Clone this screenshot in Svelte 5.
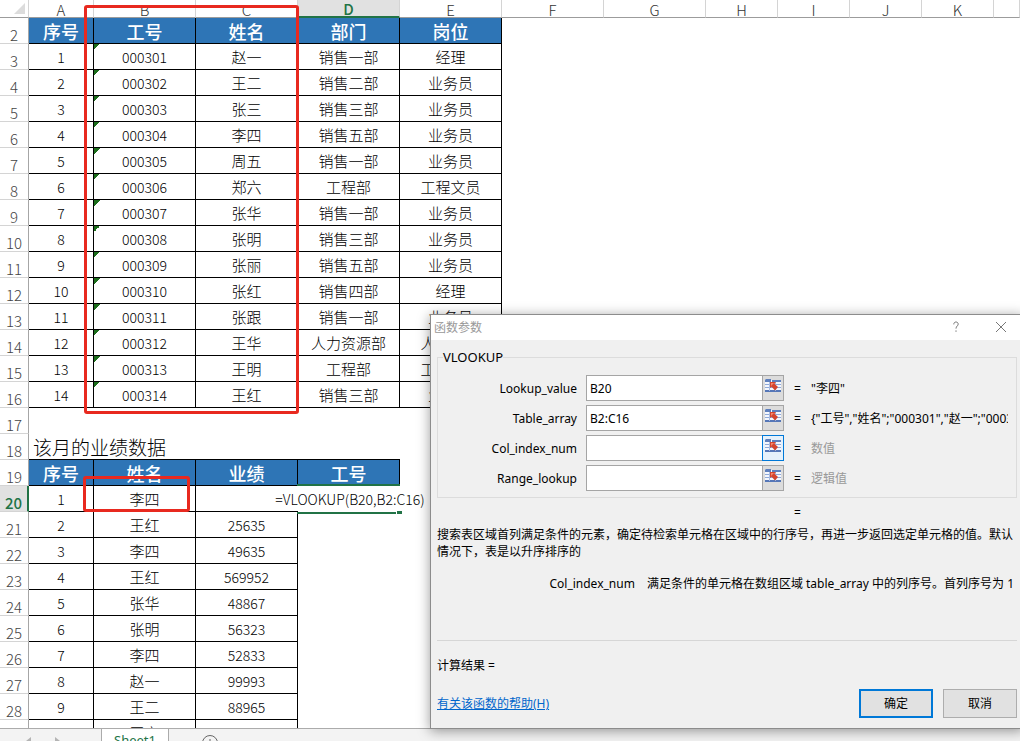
<script>
  const columns = ['A', 'B', 'C', 'D', 'E', 'F', 'G', 'H', 'I', 'J', 'K', ''];

  const staff = [
    ['赵一', '销售一部', '经理'],
    ['王二', '销售二部', '业务员'],
    ['张三', '销售三部', '业务员'],
    ['李四', '销售五部', '业务员'],
    ['周五', '销售一部', '业务员'],
    ['郑六', '工程部', '工程文员'],
    ['张华', '销售一部', '业务员'],
    ['张明', '销售三部', '业务员'],
    ['张丽', '销售五部', '业务员'],
    ['张红', '销售四部', '经理'],
    ['张跟', '销售一部', '业务员'],
    ['王华', '人力资源部', '人事专员'],
    ['王明', '工程部', '工程文员'],
    ['王红', '销售三部', '业务员']
  ];

  const sales = [
    ['王红', '25635'],
    ['李四', '49635'],
    ['王红', '569952'],
    ['张华', '48867'],
    ['张明', '56323'],
    ['李四', '52833'],
    ['赵一', '99993'],
    ['王二', '88965']
  ];

  let formula = $state('=VLOOKUP(B20,B2:C16)');

  let args = $state([
    { name: 'Lookup_value', value: 'B20', result: '"李四"', hint: false },
    {
      name: 'Table_array',
      value: 'B2:C16',
      result: '{"工号","姓名";"000301","赵一";"000302","王二"}',
      hint: false
    },
    { name: 'Col_index_num', value: '', result: '数值', hint: true, active: true },
    { name: 'Range_lookup', value: '', result: '逻辑值', hint: true }
  ]);
</script>

<div class="workbook">
  <main class="sheet">
    <table>
      <colgroup>
        <col class="w-head" />
        <col class="w-a" />
        {#each { length: 6 } as _}<col class="w-wide" />{/each}
        {#each { length: 4 } as _}<col class="w-narrow" />{/each}
        <col />
      </colgroup>
      <thead>
        <tr>
          <th class="corner"><svg viewBox="0 0 11 11"><path d="M11 0v11H0z" /></svg></th>
          {#each columns as c}
            <th class="col" class:selected={c === 'D'}>{c}</th>
          {/each}
        </tr>
      </thead>
      <tbody>
        <tr>
          <th class="row">2</th>
          {#each ['序号', '工号', '姓名', '部门', '岗位'] as t}<td class="title">{t}</td>{/each}
        </tr>
        {#each staff as [name, dept, post], i}
          <tr>
            <th class="row">{i + 3}</th>
            <td class="cell num">{i + 1}</td>
            <td class="cell num flagged">{String(301 + i).padStart(6, '0')}</td>
            <td class="cell">{name}</td>
            <td class="cell">{dept}</td>
            <td class="cell">{post}</td>
          </tr>
        {/each}
        <tr><th class="row">17</th></tr>
        <tr>
          <th class="row">18</th>
          <td class="caption" colspan="4">该月的业绩数据</td>
        </tr>
        <tr>
          <th class="row">19</th>
          {#each ['序号', '姓名', '业绩', '工号'] as t}<td class="title">{t}</td>{/each}
        </tr>
        <tr>
          <th class="row selected">20</th>
          <td class="cell num">1</td>
          <td class="cell">李四</td>
          <td class="cell"></td>
          <td class="editing">
            <input aria-label="D20" bind:value={formula} />
            <i class="handle"></i>
          </td>
        </tr>
        {#each sales as [name, amount], i}
          <tr>
            <th class="row">{i + 21}</th>
            <td class="cell num">{i + 2}</td>
            <td class="cell">{name}</td>
            <td class="cell num">{amount}</td>
          </tr>
        {/each}
        <tr>
          <th class="row"></th>
          <td class="cell"></td>
          <td class="cell">王六</td>
          <td class="cell"></td>
        </tr>
      </tbody>
    </table>
    <div class="mark mark-range"></div>
    <div class="mark mark-value"></div>
  </main>

  <footer class="tabs">
    <div class="nav">
      <svg viewBox="0 0 5 8"><path d="M5 0v8L0 4z" /></svg>
      <svg viewBox="0 0 5 8"><path d="M0 0v8l5-4z" /></svg>
    </div>
    <button class="tab">Sheet1</button>
    <button class="add" aria-label="+">
      <svg viewBox="0 0 18 18"><circle cx="9" cy="9" r="7.5" /><path d="M9 5v8M5 9h8" /></svg>
    </button>
  </footer>

  <section class="dialog" role="dialog" aria-labelledby="dlg">
    <header>
      <h1 id="dlg">函数参数</h1>
      <button aria-label="?">
        <svg viewBox="0 0 12 12"><path d="M3.8 3.4C3.8 1.7 4.8 1 6 1s2.2.8 2.2 2.1C8.200 5 6 5 6 7.600M6 9.400v1.400" /></svg>
      </button>
      <button aria-label="×">
        <svg viewBox="0 0 12 12"><path d="M1 1l10 10M11 1L1 11" /></svg>
      </button>
    </header>

    <div class="body">
      <fieldset>
        <legend>VLOOKUP</legend>
        {#each args as a}
          <div class="arg">
            <label for={a.name}>{a.name}</label>
            <div class="field">
              <input id={a.name} bind:value={a.value} />
              <button class:active={a.active} aria-label={a.name}>
                <svg viewBox="0 0 16 14">
                  <path fill="#f4f7fd" d="M0 1h16v12H0z" />
                  <path fill="#5f80bd" d="M1 0h5v3H0V1zM7 1h9v2H7z" />
                  <path fill="#8fa9d8" d="M0 5h16v1H0zM0 8h16v1H0z" />
                  <path fill="#5577b8" d="M0 11h16v2H0z" />
                  <path fill="#a9bde2" d="M4 3h1v9H4zM10 3h1v9h-1z" />
                  <path fill="#d4452f" d="M5 3h6L9.500 4.800 13 8l-3 3.400-3.400-3.600L5 9z" />
                  <path fill="#f2896e" d="M6 4h3L6 7z" />
                </svg>
              </button>
            </div>
            <span class="eq">=</span>
            <output class:hint={a.hint}>{a.result}</output>
          </div>
        {/each}
      </fieldset>
      <div class="total">=</div>
      <p class="about">搜索表区域首列满足条件的元素，确定待检索单元格在区域中的行序号，再进一步返回选定单元格的值。默认情况下，表是以升序排序的</p>
      <div class="detail">
        <span>Col_index_num</span>
        <span>满足条件的单元格在数组区域 table_array 中的列序号。首列序号为 1</span>
      </div>
      <p class="outcome">计算结果 =</p>
      <div class="actions">
        <a href="#help">有关该函数的帮助(H)</a>
        <button class="primary">确定</button>
        <button>取消</button>
      </div>
    </div>
  </section>
</div>

<style>
  :global(body) {
    margin: 0;
    background: #fff;
  }
  .workbook,
  .workbook * {
    box-sizing: border-box;
  }
  .workbook {
    position: relative;
    display: flex;
    flex-direction: column;
    height: 100vh;
    overflow: hidden;
    font-family: 'Noto Sans CJK SC', sans-serif;
    color: #000;
  }
  .workbook button,
  .workbook input {
    font: inherit;
    color: inherit;
    margin: 0;
    outline: 0;
  }

  /* Grid */
  .sheet {
    position: relative;
    flex: 1;
    min-height: 0;
    overflow: hidden;
  }
  table {
    width: 100%;
    table-layout: fixed;
    border-collapse: separate;
    border-spacing: 0;
  }
  .w-head { width: 29px; }
  .w-a { width: 65px; }
  .w-wide { width: 102px; }
  .w-narrow { width: 72px; }
  th,
  td {
    height: 26px;
    padding: 0;
    text-align: center;
    white-space: nowrap;
    line-height: 20px;
    font-weight: 300;
  }
  thead th {
    height: 18px;
    line-height: 15px;
    font-size: 15px;
    color: #333;
    border-right: 1px solid #d4d4d4;
    border-bottom: 1px solid #9c9c9c;
  }
  .col {
    padding-top: 2px;
  }
  .col.selected {
    background: #e1e1e1;
    color: #217346;
    font-weight: 500;
    border-bottom: 2px solid #217346;
    padding-top: 1px;
  }
  .corner svg {
    display: block;
    width: 11px;
    height: 11px;
    margin: 0 3px 0 auto;
    fill: #dcdcdc;
  }
  .row {
    padding-top: 9px;
    line-height: 16px;
    font-size: 15px;
    color: #444;
    border-right: 1px solid #a6a6a6;
    border-bottom: 1px solid #d4d4d4;
  }
  .row.selected {
    background: #e1e1e1;
    color: #217346;
    font-weight: 500;
    border-right: 2px solid #217346;
  }
  .title {
    background: #2e75b6;
    color: #fff;
    font-size: 18px;
    font-weight: 500;
    border-right: 1px solid #000;
    border-bottom: 1px solid #000;
  }
  .cell {
    font-size: 15px;
    border-right: 1px solid #000;
    border-bottom: 1px solid #000;
  }
  .num {
    font-size: 14px;
  }
  .flagged {
    background: linear-gradient(135deg, #1c6e1c 50%, transparent 50%) 0 0 / 6px 6px no-repeat;
  }
  .caption {
    padding-left: 4px;
    text-align: left;
    font-size: 19px;
    border-bottom: 1px solid #000;
  }
  .editing {
    position: relative;
  }
  .editing::before {
    content: '';
    position: absolute;
    inset: -2px 0 -2px -1px;
    border: solid #217346;
    border-width: 2px 0;
  }
  .editing input {
    position: absolute;
    left: -26px;
    top: 0;
    width: 156px;
    height: 25px;
    padding: 0;
    border: 0;
    background: #fff;
    font-size: 14px;
    font-weight: 300;
    text-align: center;
  }
  .handle {
    position: absolute;
    right: -2px;
    bottom: -2px;
    width: 6px;
    height: 3px;
    background: #217346;
    border-left: 1px solid #fff;
  }
  .mark {
    position: absolute;
    border: 3px solid #e8291f;
    border-radius: 3px;
  }
  .mark-range {
    left: 84px;
    top: 5px;
    width: 215px;
    height: 409px;
  }
  .mark-value {
    left: 83px;
    top: 476px;
    width: 107px;
    height: 36px;
  }

  /* Sheet tabs */
  .tabs {
    display: flex;
    flex: 0 0 13px;
    align-items: flex-start;
    overflow: hidden;
    background: #f3f3f3;
    border-top: 1px solid #ababab;
  }
  .nav {
    display: flex;
    gap: 24px;
    width: 101px;
    padding: 8px 0 0 26px;
  }
  .nav svg {
    width: 5px;
    height: 8px;
    fill: #b4b4b4;
  }
  .tabs .tab {
    width: 68px;
    height: 22px;
    padding: 0;
    background: #fff;
    border: solid #ababab;
    border-width: 0 1px;
    font-family: 'Noto Sans', sans-serif;
    font-size: 13px;
    line-height: 18px;
    color: #217346;
  }
  .tabs .add {
    margin-left: 32px;
    padding: 5px 0 0;
    background: none;
    border: 0;
  }
  .add svg {
    display: block;
    width: 18px;
    height: 18px;
    fill: none;
    stroke: #666;
  }

  /* Function arguments dialog */
  .dialog {
    position: absolute;
    left: 430px;
    right: -4px;
    top: 314px;
    background: #f0f0f0;
    border: 1px solid #8c8c8c;
    box-shadow: 0 2px 12px rgba(0, 0, 0, 0.4);
    font-family: 'Noto Sans', 'Noto Sans CJK SC', sans-serif;
    font-size: 12px;
    line-height: 17px;
  }
  .dialog header {
    display: flex;
    align-items: center;
    height: 25px;
    padding: 0 16px 1px 3px;
    background: #fff;
  }
  .dialog h1 {
    flex: 1;
    margin: 0;
    font-size: 12px;
    font-weight: 400;
    color: #999;
  }
  .dialog header button {
    display: block;
    margin-left: 33px;
    padding: 0;
    border: 0;
    background: none;
  }
  .dialog header svg {
    display: block;
    width: 12px;
    height: 12px;
    fill: none;
    stroke: #777;
  }
  .body {
    padding: 9px 6px 10px;
  }
  fieldset {
    min-width: 0;
    margin: 0;
    padding: 9px 8px 2px 0;
    border: 1px solid #dcdcdc;
  }
  legend {
    margin-left: 5px;
    padding: 0;
    font-size: 13px;
  }
  .arg {
    display: flex;
    align-items: center;
    height: 26px;
    margin-bottom: 4px;
  }
  .arg label {
    flex: 0 0 139px;
    text-align: right;
  }
  .field {
    display: flex;
    flex: 0 0 198px;
    min-width: 0;
    height: 26px;
    margin-left: 9px;
  }
  .field input {
    flex: 1;
    min-width: 0;
    padding: 0 3px;
    border: 1px solid #a5a5a5;
    border-right: 0;
    background: #fff;
  }
  .field button {
    display: flex;
    flex: 0 0 22px;
    padding: 3px 0 0 2px;
    border: 1px solid #a5a5a5;
    background: #dcdcdc;
  }
  .field button.active {
    border-color: #0078d7;
    background: #e5f1fb;
  }
  .field svg {
    flex: 0 0 16px;
    width: 16px;
    height: 14px;
  }
  .eq {
    flex: 0 0 27px;
    padding-left: 10px;
  }
  output {
    flex: 1;
    overflow: hidden;
    white-space: nowrap;
  }
  .hint {
    color: #999;
  }
  .total {
    margin-top: 6px;
    padding-left: 357px;
  }
  p {
    margin: 0;
  }
  .about {
    margin-top: 5px;
  }
  .detail {
    display: flex;
    justify-content: flex-end;
    gap: 12px;
    height: 66px;
    margin-top: 15px;
    padding-right: 3px;
    border-bottom: 1px solid #d6d6d6;
    white-space: nowrap;
  }
  .outcome {
    margin-top: 16px;
  }
  .actions {
    display: flex;
    align-items: center;
    gap: 10px;
    margin-top: 15px;
  }
  .actions a {
    margin-right: auto;
    color: #0066cc;
  }
  .actions button {
    width: 74px;
    height: 29px;
    padding: 0;
    border: 1px solid #adadad;
    background: #e1e1e1;
  }
  .actions .primary {
    border: 2px solid #0078d7;
  }
</style>
